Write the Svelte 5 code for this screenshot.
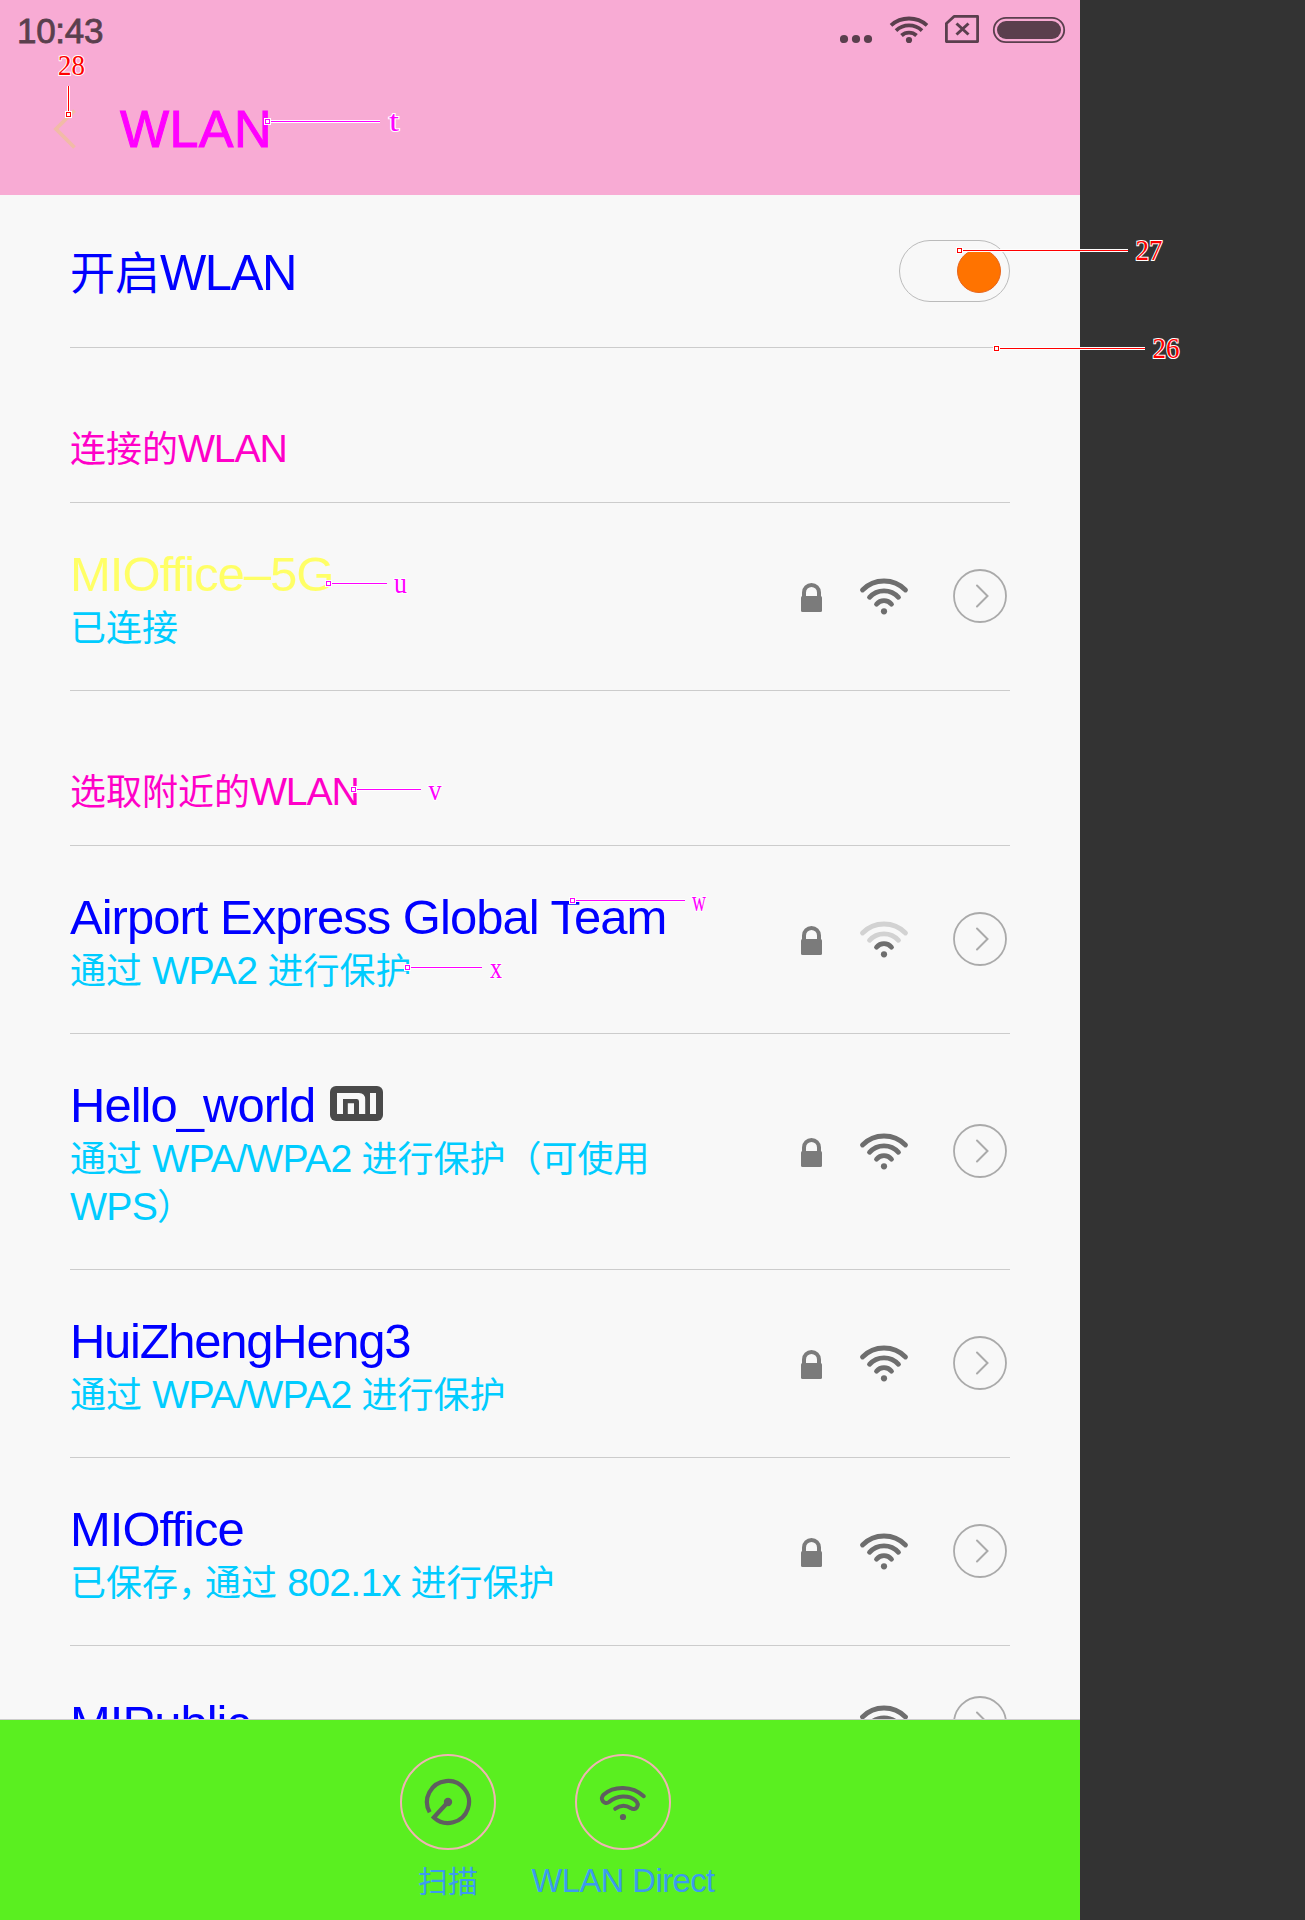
<script>
  const sections = [
    {
      heading: '连接的WLAN',
      networks: [{ name: 'MIOffice–5G', note: '已连接', active: true, lock: true }]
    },
    {
      heading: '选取附近的WLAN',
      networks: [
        { name: 'Airport Express Global Team', note: '通过 WPA2 进行保护', lock: true, weak: true },
        { name: 'Hello_world', note: '通过 WPA/WPA2 进行保护（可使用WPS）', lock: true, mi: true },
        { name: 'HuiZhengHeng3', note: '通过 WPA/WPA2 进行保护', lock: true, tight: true },
        { name: 'MIOffice', note: '已保存，通过 802.1x 进行保护', lock: true },
        { name: 'MIPublic' }
      ]
    }
  ];

  // Callouts: anchor point, end of the leader line, label box
  const callouts = [
    { id: '28', x: 68.5, y: 114.5, ex: 68.5, ey: 86, tx: 58, ty: 75, w: 27, red: true },
    { id: '27', x: 959.5, y: 250.5, ex: 1128, ey: 250.5, tx: 1135.5, ty: 260, w: 27, red: true },
    { id: '26', x: 996.5, y: 348.5, ex: 1145, ey: 348.5, tx: 1152.5, ty: 358, w: 27, red: true },
    { id: 't', x: 267.5, y: 121.5, ex: 380, ey: 121.5, tx: 389, ty: 131, w: 10 },
    { id: 'u', x: 328.5, y: 583.5, ex: 387, ey: 583.5, tx: 394, ty: 593, w: 13 },
    { id: 'v', x: 353.5, y: 789.5, ex: 421, ey: 789.5, tx: 428.5, ty: 800, w: 13 },
    { id: 'w', x: 572.5, y: 900.5, ex: 684.5, ey: 900.5, tx: 692, ty: 911, w: 14 },
    { id: 'x', x: 407.5, y: 967.5, ex: 482, ey: 967.5, tx: 490, ty: 978, w: 12 }
  ];

  // Latin runs are set larger than the Chinese ones around them
  const runs = (s) => s.match(/[\x20-\x7e]+|，|[^\x20-\x7e，]+/g) ?? [];
  const kind = (r) => (r === '，' ? 'comma' : /[\x20-\x7e]/.test(r) ? 'latin' : 'han');
</script>

{#snippet mixed(s)}{#each runs(s) as r}<span class={kind(r)}>{r}</span>{/each}{/snippet}

{#snippet wifi(weak)}
  <svg class="wifi" width="50" height="40" viewBox="0 0 50 40">
    <g fill="none" stroke="#6e6e6e" stroke-width="4.8" stroke-linecap="round">
      <path class:faint={weak} d="M3.5 14A30.2 30.2 0 0 1 46.5 14" />
      <path class:faint={weak} d="M10.5 21.3A19.4 19.4 0 0 1 39.5 21.3" />
      <path d="M17.5 28.2A9.8 9.8 0 0 1 32.5 28.2" />
    </g>
    <circle cx="25" cy="35.3" r="3.1" fill="#6e6e6e" />
  </svg>
{/snippet}

<div class="page">
  <div class="phone">
    <header>
      <div class="status">
        <span class="time">10:43</span>
        <svg width="230" height="50" viewBox="840 0 230 50" fill="none" stroke="#5a3f4d">
          <g fill="#5a3f4d" stroke="none">
            <circle cx="844" cy="39" r="4.1" /><circle cx="856" cy="39" r="4.1" /><circle cx="868" cy="39" r="4.1" />
            <circle cx="909" cy="40" r="3.1" />
            <rect x="997" y="21" width="64" height="18" rx="9" />
          </g>
          <g stroke-width="3.8">
            <path d="M891 25.4A27 27 0 0 1 927 25.4" />
            <path d="M896 30.6A19 19 0 0 1 922 30.6" />
            <path d="M901.5 35.5A11 11 0 0 1 916.5 35.5" />
          </g>
          <path stroke-width="2.8" stroke-linejoin="round" d="M954 16.4H977.6V41.6H946.4V23.5Z" />
          <path stroke-width="3" d="M956.5 23.5L968.5 34.5M968.5 23.5L956.5 34.5" />
          <rect x="993.8" y="17.8" width="70.4" height="24.4" rx="12.2" stroke-width="1.8" />
        </svg>
      </div>
      <div class="titlebar">
        <svg width="24" height="40" viewBox="0 0 24 40" fill="none" stroke="#f1bba7" stroke-width="3.8">
          <path d="M21.5 1.5L3 20L21.5 38.5" />
        </svg>
        <h1>WLAN</h1>
      </div>
    </header>

    <main>
      <div class="switch-row">
        <span class="switch-label">{@render mixed('开启WLAN')}</span>
        <span class="toggle"><i></i></span>
      </div>
      {#each sections as s}
        <h2>{@render mixed(s.heading)}</h2>
        {#each s.networks as n}
          <div class="row" class:single={!n.note}>
            <div class="info">
              <div class="name" class:active={n.active} class:tight={n.tight}>
                <span>{n.name}</span>
                {#if n.mi}
                  <svg class="mi" width="53" height="35" viewBox="0 0 53 35">
                    <rect width="53" height="35" rx="6" fill="#4a4a4a" />
                    <path fill="#f8f8f8" d="M7 7H29Q35.2 7 35.2 13.5V28H29V15.5Q29 13 27 13H13V28H7ZM17.8 17.3H24V28H17.8ZM40 7H46V28H40Z" />
                  </svg>
                {/if}
              </div>
              {#if n.note}<div class="note">{@render mixed(n.note)}</div>{/if}
            </div>
            <div class="icons">
              {#if n.lock}
                <svg class="lock" width="22" height="30" viewBox="0 0 22 30">
                  <path fill="none" stroke="#7b7b7b" stroke-width="4" d="M3 14V9.5A7.5 7.5 0 0 1 18 9.5V14" />
                  <rect x="0" y="13" width="21" height="16" rx="1.5" fill="#7b7b7b" />
                </svg>
              {/if}
              {@render wifi(n.weak)}
              <svg width="54" height="54" viewBox="0 0 54 54" fill="none" stroke="#aaa" stroke-linecap="round">
                <circle cx="27" cy="27" r="26" stroke-width="1.8" />
                <path d="M24 16.5L34.5 27L24 37.5" stroke-width="2" />
              </svg>
            </div>
          </div>
        {/each}
      {/each}
    </main>

    <footer>
      <div class="action">
        <svg width="96" height="96" viewBox="-48 -48 96 96" fill="none" stroke="#5f5f5f">
          <circle r="47" stroke="#efb3b3" stroke-width="2" />
          <path stroke-width="4.2" d="M0 0L-14.2 15.47A21 21 0 1 0 -18.3 10.3" />
          <circle r="4.2" fill="#5f5f5f" stroke="none" />
        </svg>
        <span>{@render mixed('扫描')}</span>
      </div>
      <div class="action">
        <svg width="96" height="96" viewBox="-48 -48 96 96" fill="none" stroke="#5f5f5f">
          <circle r="47" stroke="#efb3b3" stroke-width="2" />
          <path stroke-width="4" stroke-linecap="round" d="M20.8 -5.8C9 -16.5 -9 -16.5 -19.5 -7.3C-24 -3 -18.5 3.5 -14 0C-6 -7 6 -7 12.5 -1.5C17.5 3 12.5 9.5 8 6.2C3 3 -3 3 -7.8 6.8" />
          <circle cy="15" r="3.1" fill="#5f5f5f" stroke="none" />
        </svg>
        <span>{@render mixed('WLAN Direct')}</span>
      </div>
    </footer>
  </div>

  <svg class="callouts" width="1305" height="1920" viewBox="0 0 1305 1920">
    {#each callouts as c}
      <g class:red={c.red}>
        <path class="halo" d="M{c.x} {c.y}L{c.ex} {c.ey}" />
        <path class="lead" d="M{c.x} {c.y}L{c.ex} {c.ey}" />
        <rect class="rim" x={c.x - 3.5} y={c.y - 3.5} width="7" height="7" />
        <rect class="dot" x={c.x - 2} y={c.y - 2} width="4" height="4" />
        <text x={c.tx} y={c.ty} textLength={c.w} lengthAdjust="spacingAndGlyphs">{c.id}</text>
      </g>
    {/each}
  </svg>
</div>

<style>
  :global(body) { background: #333; }
  .page {
    position: relative;
    width: 1305px;
    height: 1920px;
    overflow: hidden;
    background: #333;
    font-family: 'Liberation Sans', 'Noto Sans CJK SC', sans-serif;
  }
  .phone {
    width: 1080px;
    height: 1920px;
    display: flex;
    flex-direction: column;
    background: #f8f8f8;
  }
  svg { flex: none; }
  header { flex: none; height: 195px; background: #f8abd4; }
  .status {
    display: flex;
    justify-content: space-between;
    height: 60px;
    padding: 0 10px 0 17px;
  }
  .time {
    font-size: 35px;
    line-height: 62px;
    letter-spacing: -0.3px;
    color: #5a3f4d;
    -webkit-text-stroke: 0.8px #5a3f4d;
  }
  .titlebar { display: flex; align-items: center; padding: 39px 0 0 53px; }
  h1 {
    margin: 0 0 0 43px;
    font-size: 52px;
    line-height: 60px;
    font-weight: 400;
    letter-spacing: 0.4px;
    color: #f0f;
    -webkit-text-stroke: 1px #f0f;
  }
  main { flex: 1; min-height: 0; overflow: hidden; padding: 0 70px; }
  .switch-row {
    box-sizing: border-box;
    height: 153px;
    display: flex;
    align-items: center;
    justify-content: space-between;
    border-bottom: 1px solid #ccc;
  }
  .switch-label { font-size: 45px; line-height: 56px; padding-top: 8px; color: #00f; }
  .toggle {
    box-sizing: border-box;
    width: 111px;
    height: 62px;
    border: 1px solid #bbb;
    border-radius: 31px;
    display: flex;
    align-items: center;
    justify-content: flex-end;
    padding-right: 8px;
  }
  .toggle i {
    box-sizing: border-box;
    width: 44px;
    height: 44px;
    border-radius: 50%;
    background: #ff7300;
    border: 1px solid #e8641a;
  }
  h2 {
    box-sizing: border-box;
    height: 155px;
    margin: 0;
    padding-top: 78px;
    font-size: 36px;
    line-height: 48px;
    font-weight: 400;
    color: #ff00c8;
    border-bottom: 1px solid #ccc;
  }
  .latin { font-size: 1.09em; line-height: 0; letter-spacing: -0.03em; white-space: pre-wrap; }
  .note .latin { letter-spacing: -0.02em; }
  .comma { letter-spacing: -9px; }
  .row {
    display: flex;
    align-items: center;
    justify-content: space-between;
    border-bottom: 1px solid #ccc;
  }
  .info { width: 590px; padding: 42px 0 37px; }
  .single .info { padding: 48px 0 47px; }
  .name {
    display: flex;
    align-items: center;
    height: 57px;
    margin-bottom: 3px;
    font-size: 49px;
    line-height: 58px;
    letter-spacing: -0.02em;
    white-space: nowrap;
    color: #00f;
  }
  .name.active { color: #ff6; }
  .name.tight { letter-spacing: -0.026em; }
  .mi { margin: -3px 0 0 15px; }
  .note { font-size: 36px; line-height: 48px; color: #0cf; }
  .icons { display: flex; align-items: center; padding: 0 3px 2px 0; }
  .lock { margin: 4px 36px 0 0; }
  .wifi { margin-right: 44px; }
  .faint { stroke: #d2d2d2; }
  footer {
    flex: none;
    height: 200px;
    display: flex;
    justify-content: center;
    padding-right: 9px;
    background: #5aef20;
    border-top: 1px solid #ccc;
  }
  .action {
    width: 175px;
    display: flex;
    flex-direction: column;
    align-items: center;
    padding-top: 34px;
    font-size: 30px;
    line-height: 40px;
    color: #3c9bee;
  }
  .action > span { margin-top: 12px; white-space: nowrap; }
  .action .latin { white-space: pre; letter-spacing: -0.016em; }
  .callouts { position: absolute; inset: 0; }
  .callouts path { fill: none; shape-rendering: crispEdges; }
  .callouts g { --ink: #f0f; }
  .callouts .red { --ink: #f00; }
  .callouts .halo { stroke: #fff; stroke-width: 3; }
  .callouts .lead { stroke: var(--ink); stroke-width: 1; }
  .rim { fill: #fff; }
  .dot { fill: #fff; stroke: var(--ink); stroke-width: 1; }
  .callouts text {
    font-family: 'Liberation Serif', serif;
    font-size: 29px;
    fill: var(--ink);
    stroke: #fff;
    stroke-width: 2px;
    paint-order: stroke;
  }
</style>
